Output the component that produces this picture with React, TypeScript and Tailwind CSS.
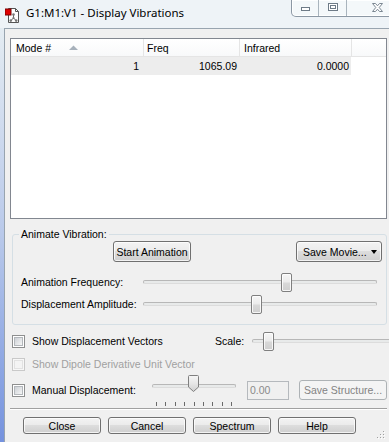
import React from "react";

const BTN_BG =
  "bg-[linear-gradient(180deg,#f3f3f3_0%,#ebebeb_49%,#dddddd_50%,#cfcfcf_100%)]";

function Btn({
  children,
  className = "",
  disabled = false,
}: {
  children: React.ReactNode;
  className?: string;
  disabled?: boolean;
}) {
  return (
    <div
      className={`flex items-center justify-center rounded-[3px] border shrink-0 ${
        disabled
          ? "border-[#adb2b5] bg-[#f4f4f4] text-[#838383]"
          : `border-[#707070] ${BTN_BG} text-black shadow-[inset_0_0_0_1px_rgba(255,255,255,0.75)]`
      } ${className}`}
    >
      {children}
    </div>
  );
}

function Check({ disabled = false }: { disabled?: boolean }) {
  return (
    <div
      className={`w-[13px] h-[13px] border p-[1px] shrink-0 ${
        disabled ? "border-[#c9c9c9] bg-[#f7f7f7]" : "border-[#8e8f8f] bg-white"
      }`}
    >
      <div
        className={`w-full h-full border ${
          disabled
            ? "border-[#e2e2e2] bg-[#f4f4f4]"
            : "border-[#b3b7bb] bg-gradient-to-br from-[#cdd1d6] to-[#f6f6f6]"
        }`}
      />
    </div>
  );
}

function Track() {
  return (
    <div className="absolute left-0 right-0 h-[4px] rounded-[2px] border border-[#b7b7b7] border-b-[#dcdcdc] bg-[#e8eaea]" />
  );
}

function Thumb() {
  return (
    <div className="w-[11px] h-[19px] rounded-[2px] border border-[#7f7f7f] bg-[linear-gradient(180deg,#f6f6f6_0%,#ececec_45%,#d8d8d8_55%,#cfcfcf_100%)] shadow-[inset_0_0_0_1px_rgba(255,255,255,0.8)]" />
  );
}

function AppIcon() {
  return (
    <svg width="16" height="16" viewBox="0 0 16 16">
      <path d="M3.5 1.5h7l3 3v11h-10z" fill="#fff" stroke="#555" />
      <path d="M10.5 1.5v3h3" fill="none" stroke="#555" />
      <rect x="0" y="2" width="6" height="6" fill="#e00000" stroke="#7a0000" strokeWidth="1" />
      <line x1="8.5" y1="8" x2="8.5" y2="11" stroke="#666" />
      <line x1="8.5" y1="11" x2="6" y2="13.5" stroke="#666" />
      <line x1="8.5" y1="11" x2="11" y2="13.5" stroke="#666" />
      <circle cx="8.5" cy="7.5" r="1.3" fill="#777" />
      <circle cx="8.5" cy="11" r="1.1" fill="#777" />
      <circle cx="5.8" cy="13.6" r="1.3" fill="#777" />
      <circle cx="11.2" cy="13.6" r="1.3" fill="#777" />
    </svg>
  );
}

function CaptionButtons() {
  return (
    <div className="w-[103px] h-[17px] -mr-[5px] shrink-0 flex border-l border-b border-r border-[#8c98a4] rounded-bl-[5px] bg-[#f4f8fa] shadow-[inset_0_0_0_1px_rgba(255,255,255,0.9)]">
      <div className="w-[27px] border-r border-[#a9b4bd] flex justify-center">
        <svg width="9" height="5" viewBox="0 0 9 5" className="mt-[7px]">
          <rect x="0.5" y="0.5" width="8" height="3" fill="#fff" stroke="#6e7b87" />
        </svg>
      </div>
      <div className="w-[28px] border-r border-[#a9b4bd] flex justify-center">
        <svg width="10" height="8" viewBox="0 0 10 8" className="mt-[3px]">
          <rect x="0.5" y="0.5" width="9" height="7" fill="#fff" stroke="#6e7b87" />
          <rect x="2.5" y="2.5" width="5" height="3" fill="#fff" stroke="#6e7b87" />
        </svg>
      </div>
      <div className="flex-1 flex justify-start pl-[25px]">
        <svg width="11" height="9" viewBox="0 0 11 9" className="mt-[3px]">
          <path
            d="M0.5 0.5h3l2 2.3 2-2.3h3l-3.3 4 3.3 4h-3l-2-2.3-2 2.3h-3l3.3-4z"
            fill="#fff"
            stroke="#7b8792"
          />
        </svg>
      </div>
    </div>
  );
}

function SizeGrip() {
  const dots = [
    [6, 0],
    [3, 3],
    [6, 3],
    [0, 6],
    [3, 6],
    [6, 6],
  ];
  return (
    <svg width="9" height="9" viewBox="0 0 9 9">
      {dots.map(([x, y], i) => (
        <g key={i}>
          <rect x={x + 1} y={y + 1} width="1" height="1" fill="#fff" />
          <rect x={x} y={y} width="1" height="1" fill="#a0a0a0" />
        </g>
      ))}
    </svg>
  );
}

export default function App() {
  const ticks = [0, 1, 2, 3, 4, 5, 6, 7, 8];
  return (
    <div className="w-[389px] h-[442px] overflow-hidden bg-[#eef3f7] flex flex-col font-['Liberation_Sans',Arial,sans-serif] text-[10.5px] leading-[12px] text-black">
      {/* Title bar */}
      <div className="h-[28px] shrink-0 flex items-start">
        <div className="ml-[5px] mt-[7px]">
          <AppIcon />
        </div>
        <div className="ml-[5px] mt-[5px] font-['Noto_Sans',sans-serif] text-[11.5px] leading-[16px] whitespace-nowrap">
          G1:M1:V1 - Display Vibrations
        </div>
        <div className="flex-1" />
        <CaptionButtons />
      </div>

      <div className="flex-1 flex min-h-0">
        <div className="w-[4px] shrink-0 bg-gradient-to-b from-[#e4ecf2] via-[#b9c9ea] to-[#7592de]" />
        <div className="w-[400px] shrink-0 border-l border-t border-[#98a4af] bg-[#f0f0f0] flex flex-col">
          {/* List view */}
          <div className="ml-[5px] mt-[9px] w-[377px] h-[181px] shrink-0 border border-[#828790] bg-white">
            <div className="h-[18px] flex border-b border-[#e5e5e5] bg-[linear-gradient(180deg,#ffffff,#f8f9fa)]">
              <div className="w-[133px] border-r border-[#e5e5e5] flex items-center pl-[5px]">
                <span>Mode #</span>
                <svg width="9" height="5" viewBox="0 0 9 5" className="ml-[18px]">
                  <path d="M0 5L4.5 0.5 9 5z" fill="#a7b1bb" />
                </svg>
              </div>
              <div className="w-[96px] border-r border-[#e5e5e5] flex items-center pl-[3px]">
                Freq
              </div>
              <div className="w-[112px] border-r border-[#e5e5e5] flex items-center pl-[4px]">
                Infrared
              </div>
            </div>
            <div className="h-[18px] w-[340px] flex bg-[#ededed]">
              <div className="w-[133px] flex items-center justify-end pr-[5px]">1</div>
              <div className="w-[96px] flex items-center justify-end pr-[3px]">1065.09</div>
              <div className="w-[111px] flex items-center justify-end pr-[2px]">0.0000</div>
            </div>
          </div>

          {/* Group box */}
          <fieldset className="ml-[7px] mt-[9px] w-[375px] shrink-0 border border-[#d5dfe5] rounded-[3px] pb-[10px]">
            <legend className="ml-[6px] px-[2px] leading-[12px]">Animate Vibration:</legend>
            <div className="flex flex-col">
              <div className="mt-[1px] h-[21px] flex">
                <Btn className="ml-[100px] w-[78px] h-[21px]">Start Animation</Btn>
                <Btn className="ml-auto mr-[4px] w-[86px] h-[21px] !justify-start pl-[6px]">
                  <span>Save Movie...</span>
                  <svg width="6" height="4" viewBox="0 0 6 4" className="ml-[4px]">
                    <path d="M0 0h6L3 4z" fill="#000" />
                  </svg>
                </Btn>
              </div>
              <div className="mt-[10px] h-[20px] flex items-center">
                <div className="ml-[8px] w-[122px] shrink-0">Animation Frequency:</div>
                <div className="relative w-[234px] h-[20px] flex items-center">
                  <Track />
                  <div className="absolute left-[138px] top-[1px]">
                    <Thumb />
                  </div>
                </div>
              </div>
              <div className="mt-[2px] h-[20px] flex items-center">
                <div className="ml-[8px] w-[122px] shrink-0">Displacement Amplitude:</div>
                <div className="relative w-[234px] h-[20px] flex items-center">
                  <Track />
                  <div className="absolute left-[108px] top-[1px]">
                    <Thumb />
                  </div>
                </div>
              </div>
            </div>
          </fieldset>

          {/* Checkbox rows */}
          <div className="mt-[6px] h-[20px] flex items-center shrink-0">
            <div className="w-[210px] shrink-0 flex items-center">
              <div className="ml-[7px]">
                <Check />
              </div>
              <span className="ml-[7px]">Show Displacement Vectors</span>
            </div>
            <span>Scale:</span>
            <div className="ml-[8px] relative w-[160px] h-[20px] flex items-center">
              <Track />
              <div className="absolute left-[11px] top-[1px]">
                <Thumb />
              </div>
            </div>
          </div>

          <div className="mt-[3px] h-[20px] flex items-center shrink-0">
            <div className="ml-[7px]">
              <Check disabled />
            </div>
            <span className="ml-[7px] text-[#a0a0a0]">Show Dipole Derivative Unit Vector</span>
          </div>

          <div className="mt-[6px] h-[20px] flex items-center shrink-0">
            <div className="w-[147px] shrink-0 flex items-center">
              <div className="ml-[7px]">
                <Check />
              </div>
              <span className="ml-[7px]">Manual Displacement:</span>
            </div>
            <div className="relative w-[84px] h-[20px] shrink-0">
              <div className="absolute left-0 right-0 top-[4px] h-[4px] rounded-[2px] border border-[#b7b7b7] border-b-[#dcdcdc] bg-[#e8eaea]" />
              <div className="absolute left-[36px] -top-[5px]">
                <svg width="11" height="17" viewBox="0 0 11 17">
                  <defs>
                    <linearGradient id="tg" x1="0" y1="0" x2="0" y2="1">
                      <stop offset="0" stopColor="#f6f6f6" />
                      <stop offset="0.5" stopColor="#e6e6e6" />
                      <stop offset="1" stopColor="#cfcfcf" />
                    </linearGradient>
                  </defs>
                  <path
                    d="M1.5 0.5h8a1 1 0 0 1 1 1v10.5l-5 4.5-5-4.5v-10.5a1 1 0 0 1 1-1z"
                    fill="url(#tg)"
                    stroke="#7f7f7f"
                  />
                </svg>
              </div>
              <div className="absolute left-[4px] w-[76px] top-[22px] flex justify-between">
                {ticks.map((t) => (
                  <div key={t} className="w-[1px] h-[4px] bg-[#6a6a6a]" />
                ))}
              </div>
            </div>
            <div className="ml-[11px] w-[42px] h-[19px] shrink-0 border border-[#b5b9bd] bg-[#f0f0f0] text-[#8a8a8a] flex items-center pl-[2px]">
              0.00
            </div>
            <Btn disabled className="ml-[10px] w-[88px] h-[20px]">
              Save Structure...
            </Btn>
          </div>

          {/* Separator */}
          <div className="ml-[5px] mt-[8px] w-[377px] h-[2px] shrink-0 border-t border-[#a0a0a0] border-b border-b-white" />

          {/* Bottom buttons */}
          <div className="mt-[7px] h-[17px] flex shrink-0">
            <div className="ml-[18px] flex gap-[7px]">
              <Btn className="w-[78px] h-[17px]">Close</Btn>
              <Btn className="w-[78px] h-[17px]">Cancel</Btn>
              <Btn className="w-[78px] h-[17px]">Spectrum</Btn>
              <Btn className="w-[78px] h-[17px]">Help</Btn>
            </div>
            <div className="ml-[21px] mt-[14px]">
              <SizeGrip />
            </div>
          </div>
        </div>
      </div>
    </div>
  );
}
